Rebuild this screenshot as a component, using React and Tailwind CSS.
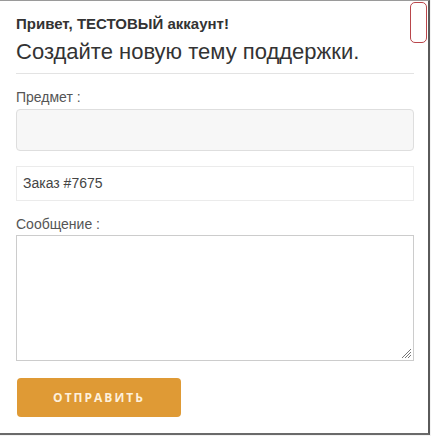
import React from "react";

export default function App() {
  return (
    <div className="w-[431px] h-[436px] bg-[#f3f3f3] overflow-hidden font-['Liberation_Sans',Arial,sans-serif]">
      <div className="relative w-[430px] h-[435px] bg-white border-t border-t-[#9a9a9a] border-r-2 border-r-[#5a5a5a] border-b-2 border-b-[#6a6a6a] pl-4 pr-[14px]">
        {/* close button outline */}
        <div className="absolute right-[1px] top-[1px] w-[17px] h-[41px] border border-[#b9464b] rounded-[5px]"></div>

        <h3 className="mt-[13px] text-[15px] leading-5 font-bold text-[#333]">
          Привет, ТЕСТОВЫЙ аккаунт!
        </h3>
        <h2 className="mt-[6px] text-[22px] leading-6 text-[#333]">
          Создайте новую тему поддержки.
        </h2>
        <div className="mt-[9px] h-px bg-[#e3e3e3]"></div>

        <div className="mt-[13px] text-[14px] leading-5 text-[#555]">Предмет :</div>
        <div className="mt-[2px] h-[42px] rounded-[4px] border border-[#dedede] bg-[#f7f7f7]"></div>

        <div className="mt-[15px] h-[35px] border border-[#ebebeb] flex items-center pl-[6px] text-[14px] text-[#444]">
          Заказ #7675
        </div>

        <div className="mt-[13px] text-[14px] leading-5 text-[#555]">Сообщение :</div>
        <div className="relative mt-[1px] h-[126px] border border-[#cccccc]">
          <svg
            className="absolute right-[1px] bottom-[1px]"
            width="12"
            height="12"
            viewBox="0 0 12 12"
          >
            <path
              d="M11 2 L2 11 M11 5 L5 11 M11 8 L8 11"
              stroke="#777"
              strokeWidth="1"
            />
          </svg>
        </div>

        <button className="mt-[17px] ml-px w-[164px] h-[39px] rounded-[4px] bg-[#df9a35] text-[#fdf0dc] text-[12px] font-bold tracking-[2px] font-['Open_Sans',sans-serif]">
          ОТПРАВИТЬ
        </button>
      </div>
    </div>
  );
}
